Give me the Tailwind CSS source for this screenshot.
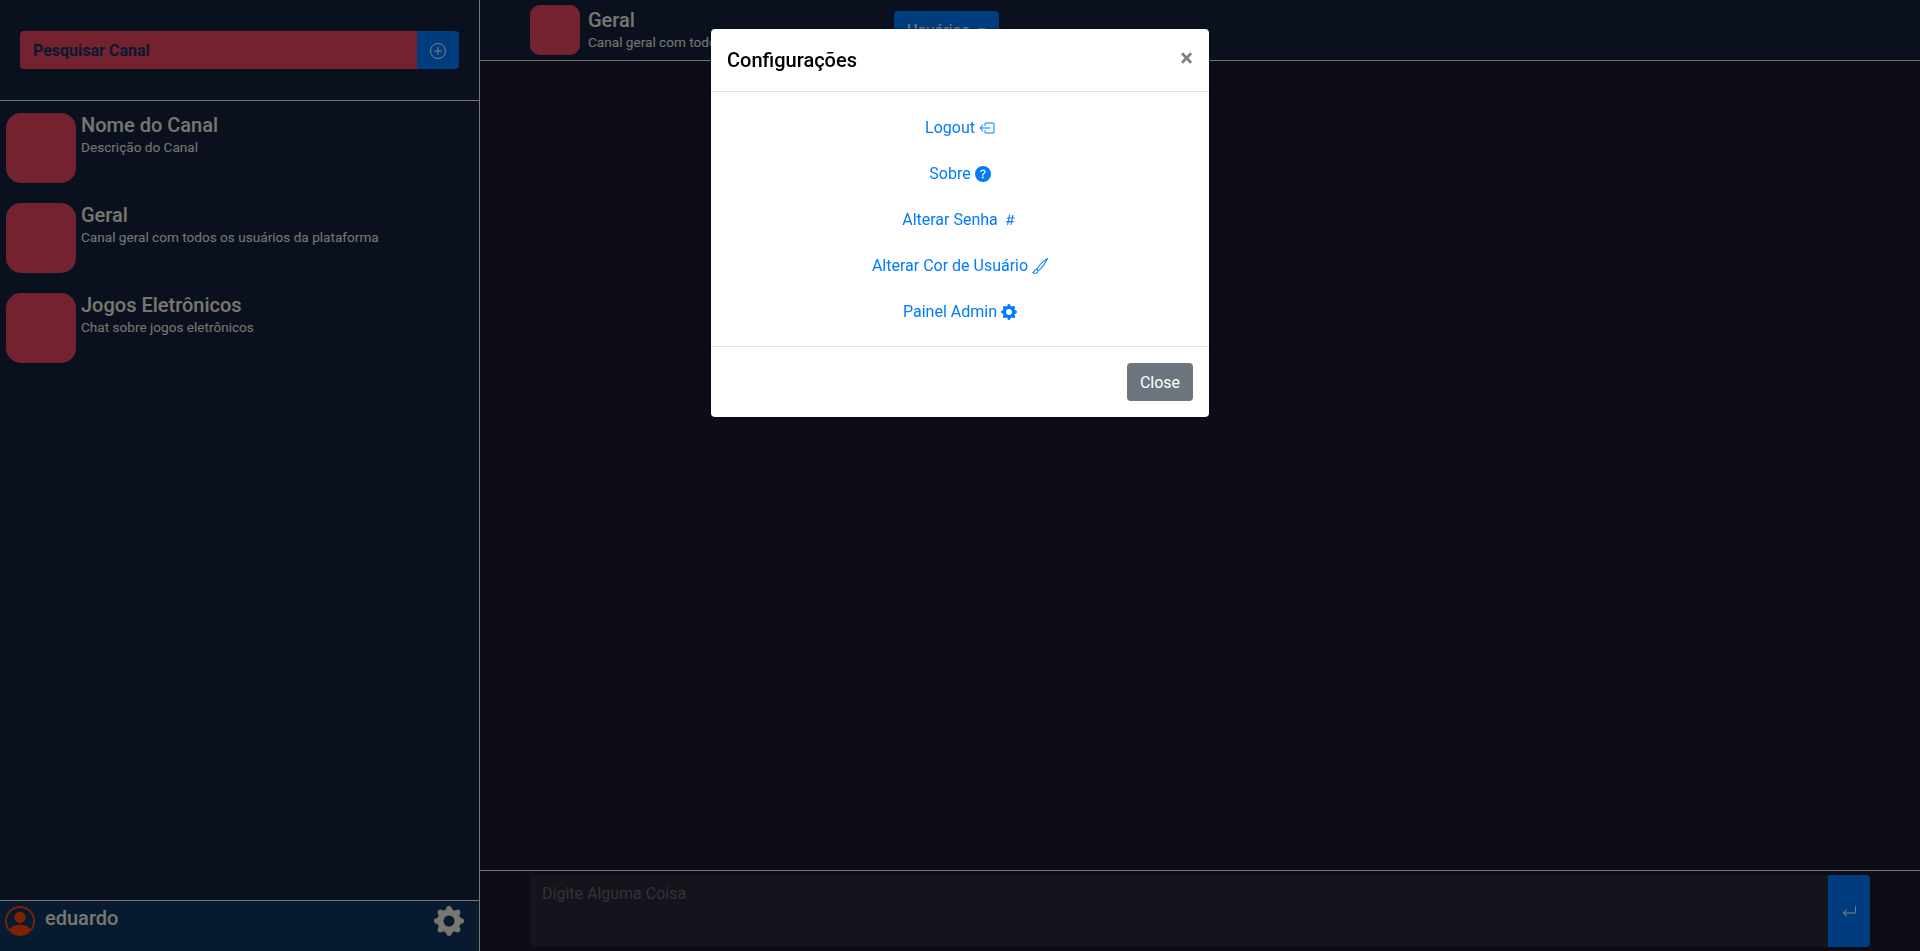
<!DOCTYPE html>
<html lang="pt-BR">
<head>
<meta charset="utf-8">
<title>Chat</title>
<script src="https://cdn.jsdelivr.net/npm/@tailwindcss/browser@4"></script>
</head>
<body class="h-screen overflow-hidden bg-[#1a1a2e] font-[Roboto,sans-serif] text-base leading-6 text-[#eeeee0]">
<div class="flex h-screen">
  <aside class="flex w-[480px] shrink-0 flex-col border-r border-[#eeeee0] bg-[#16213e]">
    <div class="h-[101px] border-b border-[#eeeee0] pt-[31px] pl-5">
      <div class="flex h-[38px] w-[439px] overflow-hidden rounded">
        <div class="flex flex-1 items-center bg-[#e94560] pt-px pl-[13px] font-bold text-[#0f3460]">Pesquisar Canal</div>
        <button class="flex w-[42px] items-center justify-center bg-[#007bff] pt-0.5 text-white">
          <svg class="size-4" viewBox="0 0 16 16" fill="none" stroke="currentColor"><circle cx="8" cy="8" r="7.5"/><path stroke-linecap="round" d="M8 4.500v7M4.500 8h7"/></svg>
        </button>
      </div>
    </div>
    <div class="flex flex-1 flex-col gap-5 pt-3 pl-1.5">
      <div class="flex h-[70px] gap-[5px]">
        <div class="size-[70px] rounded-[15px] bg-[#e94560]"></div>
        <div><h5 class="text-xl leading-6 font-medium">Nome do Canal</h5><p class="text-[13.6px] leading-5">Descrição do Canal</p></div>
      </div>
      <div class="flex h-[70px] gap-[5px]">
        <div class="size-[70px] rounded-[15px] bg-[#e94560]"></div>
        <div><h5 class="text-xl leading-6 font-medium">Geral</h5><p class="text-[13.6px] leading-5">Canal geral com todos os usuários da plataforma</p></div>
      </div>
      <div class="flex h-[70px] gap-[5px]">
        <div class="size-[70px] rounded-[15px] bg-[#e94560]"></div>
        <div><h5 class="text-xl leading-6 font-medium">Jogos Eletrônicos</h5><p class="text-[13.6px] leading-5">Chat sobre jogos eletrônicos</p></div>
      </div>
    </div>
    <div class="flex h-[51px] items-start border-t border-[#eeeee0] bg-[#0f3460] pt-[5px] pr-[15px] pl-[5px]">
      <svg class="size-[30px] text-[#ff4500]" viewBox="0 0 16 16" fill="currentColor"><path d="M13.468 12.37C12.758 11.226 11.195 10 8 10s-4.757 1.225-5.468 2.37A6.987 6.987 0 0 0 8 15a6.987 6.987 0 0 0 5.468-2.63z"/><path fill-rule="evenodd" d="M8 9a3 3 0 1 0 0-6 3 3 0 0 0 0 6z"/><path fill-rule="evenodd" d="M8 1a7 7 0 1 0 0 14A7 7 0 0 0 8 1zM0 8a8 8 0 1 1 16 0A8 8 0 0 1 0 8z"/></svg>
      <h5 class="ml-2.5 text-xl leading-6 font-medium">eduardo</h5>
      <svg class="ml-auto size-[30px]" viewBox="0 0 16 16" fill="currentColor"><path fill-rule="evenodd" d="M9.405 1.05c-.413-1.4-2.397-1.4-2.81 0l-.1.34a1.464 1.464 0 0 1-2.105.872l-.31-.17c-1.283-.698-2.686.705-1.987 1.987l.169.311c.446.82.023 1.841-.872 2.105l-.34.1c-1.4.413-1.4 2.397 0 2.81l.34.1a1.464 1.464 0 0 1 .872 2.105l-.17.31c-.698 1.283.705 2.686 1.987 1.987l.311-.169a1.464 1.464 0 0 1 2.105.872l.1.34c.413 1.4 2.397 1.4 2.81 0l.1-.34a1.464 1.464 0 0 1 2.105-.872l.31.17c1.283.698 2.686-.705 1.987-1.987l-.169-.311a1.464 1.464 0 0 1 .872-2.105l.34-.1c1.4-.413 1.4-2.397 0-2.81l-.34-.1a1.464 1.464 0 0 1-.872-2.105l.17-.31c.698-1.283-.705-2.686-1.987-1.987l-.311.169a1.464 1.464 0 0 1-2.105-.872l-.1-.34zM8 10.93a2.929 2.929 0 1 0 0-5.86 2.929 2.929 0 0 0 0 5.858z"/></svg>
    </div>
  </aside>
  <main class="flex min-w-0 flex-1 flex-col">
    <header class="flex h-[61px] shrink-0 items-start border-b border-[#eeeee0] bg-[#16213e] pt-[5px] pl-[50px]">
      <div class="size-[50px] shrink-0 rounded-[10px] bg-[#e94560]"></div>
      <div class="ml-2 w-[306px] pt-[3px]"><h5 class="text-xl leading-6 font-medium">Geral</h5><p class="text-[13.6px] leading-5">Canal geral com todos os usuários da plataforma</p></div>
      <button class="mt-1.5 h-[38px] w-[105px] shrink-0 rounded bg-[#007bff] pt-0.5 pl-[13px] text-left whitespace-nowrap text-white">Usuários <span class="ml-1 inline-block border-x-[4.8px] border-t-[4.8px] border-x-transparent border-t-white align-[4px]"></span></button>
    </header>
    <section class="flex-1"></section>
    <footer class="flex h-[81px] border-t border-[#eeeee0] px-[50px] py-1">
      <div class="h-[72px] flex-1 rounded-l bg-[#292938] px-3 py-[7px] text-[#62666a]">Digite Alguma Coisa</div>
      <button class="flex h-[72px] w-[42px] items-center justify-center rounded-r bg-[#007bff] pt-0.5 text-white">
        <svg class="size-4" viewBox="0 0 16 16" fill="currentColor"><path fill-rule="evenodd" d="M5.854 5.646a.5.5 0 0 1 0 .708L3.207 9l2.647 2.646a.5.5 0 0 1-.708.708l-3-3a.5.5 0 0 1 0-.708l3-3a.5.5 0 0 1 .708 0z"/><path fill-rule="evenodd" d="M14.5 2a.5.5 0 0 1 .5.5v5.500A1.5 1.5 0 0 1 13.5 9.5H3a.5.5 0 0 1 0-1h10.500a.5.5 0 0 0 .5-.5V2.500a.5.5 0 0 1 .5-.5z"/></svg>
      </button>
    </footer>
  </main>
</div>

<div class="fixed inset-0 flex items-start justify-center bg-black/50 pt-7">
  <div class="w-[500px] rounded-[5px] border border-black/20 bg-white bg-clip-padding text-black">
    <div class="flex h-[63px] items-start justify-between border-b border-[#dee2e6] p-4">
      <h5 class="text-xl leading-[30px] font-medium">Configurações</h5>
      <button class="pt-px text-2xl leading-6 font-bold text-black/50">×</button>
    </div>
    <div class="flex flex-col items-center gap-2 p-4 text-[#007bff]">
      <a class="flex h-[38px] items-center gap-1 pt-0.5">Logout
        <svg class="size-4" viewBox="0 0 16 16" fill="currentColor"><path fill-rule="evenodd" d="M4.354 11.354a.5.5 0 0 0 0-.708L1.707 8l2.647-2.646a.5.5 0 1 0-.708-.708l-3 3a.5.5 0 0 0 0 .708l3 3a.5.5 0 0 0 .708 0z"/><path fill-rule="evenodd" d="M11.5 8a.5.5 0 0 0-.5-.5H2a.5.5 0 0 0 0 1h9a.5.5 0 0 0 .5-.5z"/><path fill-rule="evenodd" d="M14 13.5a1.5 1.5 0 0 0 1.5-1.5V4A1.5 1.5 0 0 0 14 2.5H7A1.5 1.5 0 0 0 5.500 4v1.500a.5.5 0 0 0 1 0V4a.5.5 0 0 1 .5-.5h7a.5.5 0 0 1 .5.5v8a.5.5 0 0 1-.5.5H7a.5.5 0 0 1-.5-.5v-1.500a.5.5 0 0 0-1 0V12A1.5 1.5 0 0 0 7 13.5h7z"/></svg>
      </a>
      <a class="flex h-[38px] items-center gap-1 pt-0.5">Sobre
        <svg class="size-4" viewBox="0 0 16 16" fill="currentColor"><path fill-rule="evenodd" d="M16 8A8 8 0 1 1 0 8a8 8 0 0 1 16 0zM6.570 6.033H5.250C5.220 4.147 6.680 3.500 8.006 3.500c1.397 0 2.673.730 2.673 2.240 0 1.080-.635 1.594-1.244 2.057-.737.559-1.010.768-1.010 1.486v.355H7.117l-.007-.463c-.038-.927.495-1.498 1.168-1.987.590-.444.965-.736.965-1.371 0-.825-.628-1.168-1.314-1.168-.901 0-1.358.603-1.358 1.384zm1.251 6.443c-.584 0-1.009-.394-1.009-.927 0-.552.425-.940 1.010-.940.609 0 1.028.388 1.028.940 0 .533-.420.927-1.029.927z"/></svg>
      </a>
      <a class="flex h-[38px] items-center gap-1 pt-0.5">Alterar Senha
        <svg class="size-4" viewBox="0 0 16 16" fill="currentColor"><path d="M8.390 12.648a1.320 1.320 0 0 0-.015.180c0 .305.210.508.500.508.266 0 .492-.172.555-.477l.554-2.703h1.204c.421 0 .617-.234.617-.547 0-.312-.188-.530-.617-.530h-.985l.516-2.524h1.265c.430 0 .618-.227.618-.547 0-.313-.188-.524-.618-.524h-1.046l.476-2.304a1.060 1.060 0 0 0 .016-.164.510.510 0 0 0-.516-.516.540.540 0 0 0-.539.430l-.523 2.554H7.617l.477-2.304c.008-.040.015-.118.015-.164a.512.512 0 0 0-.523-.516.539.539 0 0 0-.531.430L6.530 5.484H5.414c-.430 0-.617.220-.617.532 0 .312.187.539.617.539h.906l-.515 2.523H4.609c-.421 0-.609.219-.609.531 0 .313.188.547.610.547h.976l-.516 2.492c-.008.040-.015.125-.015.180 0 .305.210.508.500.508.265 0 .492-.172.554-.477l.555-2.703h2.242l-.515 2.492zm-1-6.109h2.266l-.515 2.563H6.859l.532-2.563z"/></svg>
      </a>
      <a class="flex h-[38px] items-center gap-1 pt-0.5">Alterar Cor de Usuário
        <svg class="size-4" viewBox="0 0 16 16" fill="currentColor"><path fill-rule="evenodd" d="M15.825.12a.5.5 0 0 1 .132.584c-1.530 3.430-4.743 8.170-7.095 10.640a6.067 6.067 0 0 1-2.373 1.534c-.018.227-.060.538-.160.868-.201.659-.667 1.479-1.708 1.740a8.117 8.117 0 0 1-3.078.132 3.658 3.658 0 0 1-.563-.135 1.382 1.382 0 0 1-.465-.247.714.714 0 0 1-.204-.288.622.622 0 0 1 .004-.443c.095-.245.316-.380.461-.452.393-.197.625-.453.867-.826.094-.144.184-.297.287-.472l.117-.198c.151-.255.326-.540.546-.848.528-.739 1.200-.925 1.746-.896.126.007.243.025.348.048.062-.172.142-.380.238-.608.261-.619.658-1.419 1.187-2.069 2.175-2.670 6.180-6.206 9.117-8.104a.5.5 0 0 1 .596.040zM4.705 11.912a1.230 1.230 0 0 0-.419-.100c-.247-.013-.574.050-.880.479a11.010 11.010 0 0 0-.500.777l-.104.177c-.107.181-.213.362-.320.528-.206.317-.438.610-.760.861a7.127 7.127 0 0 0 2.657-.120c.559-.139.843-.569.993-1.060a3.121 3.121 0 0 0 .126-.750l-.793-.792zm1.440.026c.120-.040.277-.100.458-.183a5.068 5.068 0 0 0 1.535-1.100c1.900-1.996 4.412-5.570 6.052-8.631-2.591 1.927-5.566 4.660-7.302 6.792-.442.543-.796 1.243-1.042 1.826-.121.288-.214.540-.275.720v.001l.575.575z"/></svg>
      </a>
      <a class="flex h-[38px] items-center gap-1 pt-0.5">Painel Admin
        <svg class="size-4" viewBox="0 0 16 16" fill="currentColor"><path fill-rule="evenodd" d="M9.405 1.050c-.413-1.400-2.397-1.400-2.810 0l-.100.340a1.464 1.464 0 0 1-2.105.872l-.310-.170c-1.283-.698-2.686.705-1.987 1.987l.169.311c.446.820.023 1.841-.872 2.105l-.340.100c-1.400.413-1.400 2.397 0 2.810l.340.100a1.464 1.464 0 0 1 .872 2.105l-.170.310c-.698 1.283.705 2.686 1.987 1.987l.311-.169a1.464 1.464 0 0 1 2.105.872l.100.340c.413 1.400 2.397 1.400 2.810 0l.100-.340a1.464 1.464 0 0 1 2.105-.872l.310.170c1.283.698 2.686-.705 1.987-1.987l-.169-.311a1.464 1.464 0 0 1 .872-2.105l.340-.100c1.400-.413 1.400-2.397 0-2.810l-.340-.100a1.464 1.464 0 0 1-.872-2.105l.170-.310c.698-1.283-.705-2.686-1.987-1.987l-.311.169a1.464 1.464 0 0 1-2.105-.872l-.100-.340zM8 10.930a2.929 2.929 0 1 0 0-5.860 2.929 2.929 0 0 0 0 5.858z"/></svg>
      </a>
    </div>
    <div class="flex justify-end border-t border-[#dee2e6] p-4">
      <button class="h-[38px] w-[66px] rounded bg-[#6c757d] pt-0.5 text-white">Close</button>
    </div>
  </div>
</div>
</body>
</html>
